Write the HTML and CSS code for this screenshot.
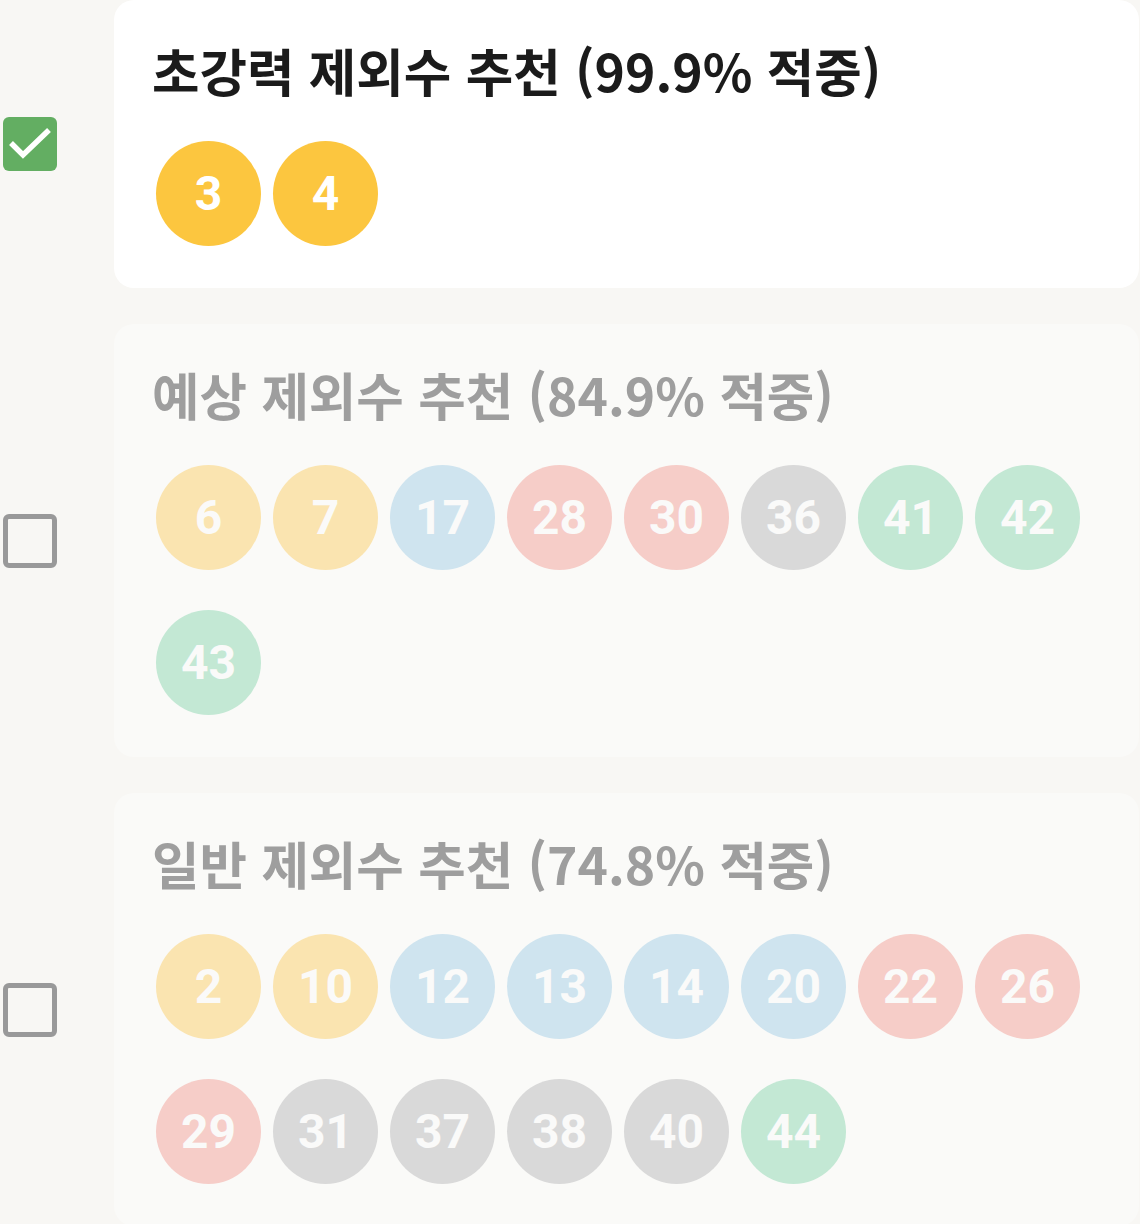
FILE: index.html
```html
<!DOCTYPE html>
<html lang="ko">
<head>
    <meta charset="UTF-8">
    <meta name="viewport" content="width=device-width, initial-scale=1.0">
    <title>제외수 추천</title>
    <link rel="stylesheet" href="styles.css">
</head>
<body>
    <div class="list">
        <div class="row">
            <div class="check-col">
                <span class="check checked">
                    <svg viewBox="0 0 54 54" width="54" height="54">
                        <path d="M8 26 L20 38 L46 13" fill="none" stroke="#fff" stroke-width="5.5"/>
                    </svg>
                </span>
            </div>
            <div class="card active">
                <h2 class="title">초강력 제외수 추천 (99.9% 적중)</h2>
                <ul class="balls">
                    <li class="ball yellow">3</li>
                    <li class="ball yellow">4</li>
                </ul>
            </div>
        </div>

        <div class="row">
            <div class="check-col">
                <span class="check"></span>
            </div>
            <div class="card">
                <h2 class="title">예상 제외수 추천 (84.9% 적중)</h2>
                <ul class="balls">
                    <li class="ball yellow">6</li>
                    <li class="ball yellow">7</li>
                    <li class="ball blue">17</li>
                    <li class="ball red">28</li>
                    <li class="ball red">30</li>
                    <li class="ball gray">36</li>
                    <li class="ball green">41</li>
                    <li class="ball green">42</li>
                    <li class="ball green">43</li>
                </ul>
            </div>
        </div>

        <div class="row">
            <div class="check-col">
                <span class="check"></span>
            </div>
            <div class="card">
                <h2 class="title">일반 제외수 추천 (74.8% 적중)</h2>
                <ul class="balls">
                    <li class="ball yellow">2</li>
                    <li class="ball yellow">10</li>
                    <li class="ball blue">12</li>
                    <li class="ball blue">13</li>
                    <li class="ball blue">14</li>
                    <li class="ball blue">20</li>
                    <li class="ball red">22</li>
                    <li class="ball red">26</li>
                    <li class="ball red">29</li>
                    <li class="ball gray">31</li>
                    <li class="ball gray">37</li>
                    <li class="ball gray">38</li>
                    <li class="ball gray">40</li>
                    <li class="ball green">44</li>
                </ul>
            </div>
        </div>
    </div>
</body>
</html>
```

FILE: styles.css
```css
* {
    padding: 0;
    margin: 0;
    box-sizing: border-box;
}

ul,
li {
    list-style: none;
}

body {
    background: #f8f7f4;
    font-family: "Noto Sans CJK KR", "Noto Sans", sans-serif;
}

.list {
    display: flex;
    flex-direction: column;
    gap: 36px;
}

.row {
    display: flex;
    align-items: center;
}

.check-col {
    width: 114px;
    flex-shrink: 0;
    padding-left: 3px;
}

.check {
    display: block;
    width: 54px;
    height: 54px;
    border: 5px solid #999;
    border-radius: 6px;
}

.check.checked {
    border: 0;
    background: #63ae62;
}

.check svg {
    display: block;
}

.card {
    flex: 1;
    margin-right: 1px;
    background: #fafaf8;
    border-radius: 20px;
    padding: 35px 38px 42px;
}

.card.active {
    background: #fff;
}

.title {
    font-size: 51.6px;
    font-weight: 700;
    line-height: 70px;
    color: #9e9e9e;
}

.card.active .title {
    color: #1b1b1b;
}

.balls {
    display: flex;
    flex-wrap: wrap;
    gap: 40px 12px;
    margin: 36px 0 0 4px;
}

.ball {
    width: 105px;
    height: 105px;
    border-radius: 50%;
    display: flex;
    align-items: center;
    justify-content: center;
    font-family: Roboto, "Noto Sans", sans-serif;
    font-weight: 700;
    font-size: 48px;
    color: #fafaf9;
}

.ball.yellow {
    background: #fae4b0;
}

.ball.blue {
    background: #cfe4ef;
}

.ball.red {
    background: #f6cdc8;
}

.ball.gray {
    background: #d9d9d9;
}

.ball.green {
    background: #c3e8d4;
}

.card.active .ball.yellow {
    background: #fcc63f;
    color: #fff;
}
```
